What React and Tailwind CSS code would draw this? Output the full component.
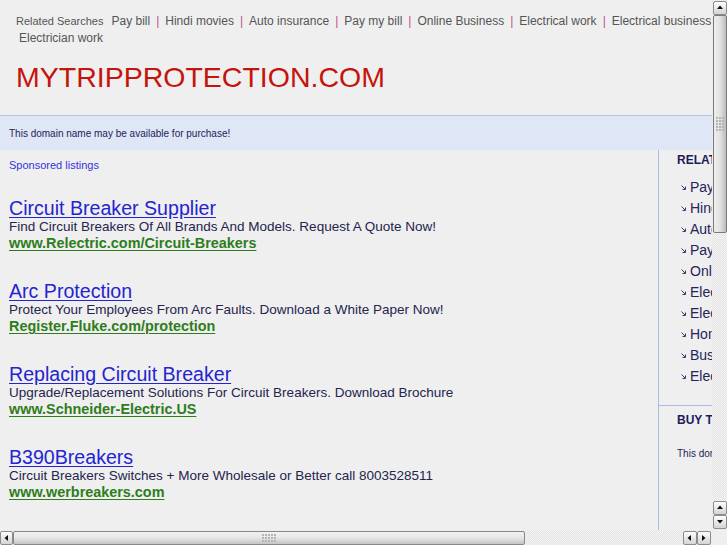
import React from "react";

const topLinks = [
  "Pay bill",
  "Hindi movies",
  "Auto insurance",
  "Pay my bill",
  "Online Business",
  "Electrical work",
  "Electrical business",
  "Electrician work",
];

const ads = [
  {
    title: "Circuit Breaker Supplier",
    desc: "Find Circuit Breakers Of All Brands And Models. Request A Quote Now!",
    url: "www.Relectric.com/Circuit-Breakers",
  },
  {
    title: "Arc Protection",
    desc: "Protect Your Employees From Arc Faults. Download a White Paper Now!",
    url: "Register.Fluke.com/protection",
  },
  {
    title: "Replacing Circuit Breaker",
    desc: "Upgrade/Replacement Solutions For Circuit Breakers. Download Brochure",
    url: "www.Schneider-Electric.US",
  },
  {
    title: "B390Breakers",
    desc: "Circuit Breakers Switches + More Wholesale or Better call 8003528511",
    url: "www.werbreakers.com",
  },
];

const sideLinks = [
  "Pay bill",
  "Hindi movies",
  "Auto insurance",
  "Pay my bill",
  "Online Business",
  "Electrical work",
  "Electrical business",
  "Home insurance",
  "Business loans",
  "Electrician work",
];

function Arrow() {
  return (
    <svg width="5" height="5" viewBox="0 0 5 5" className="shrink-0">
      <path d="M0.5 0.5 L4 4" stroke="#3a3a6a" strokeWidth="1" />
      <path d="M4.5 1.5 V4.5 H1.5" fill="none" stroke="#3a3a6a" strokeWidth="1" />
    </svg>
  );
}

function Tri({ dir }) {
  const d = {
    up: "M1 5 L4 1.5 L7 5 Z",
    down: "M1 2 L4 5.5 L7 2 Z",
    left: "M5 1 L1.5 4 L5 7 Z",
    right: "M2 1 L5.5 4 L2 7 Z",
  }[dir];
  return (
    <svg width="8" height="8" viewBox="0 0 8 8">
      <path d={d} fill="#111" />
    </svg>
  );
}

function SbButton({ dir, className }) {
  return (
    <div
      className={`flex items-center justify-center border border-[#8c8c8c] rounded-[2px] bg-gradient-to-b from-[#fdfdfd] to-[#d4d4d4] ${className}`}
    >
      <Tri dir={dir} />
    </div>
  );
}

function Grip({ cols, rows }) {
  return (
    <div
      className="grid gap-[1px]"
      style={{ gridTemplateColumns: `repeat(${cols}, 2px)`, gridTemplateRows: `repeat(${rows}, 2px)` }}
    >
      {Array.from({ length: cols * rows }).map((_, i) => (
        <div key={i} className="bg-[#b4b4b4]" />
      ))}
    </div>
  );
}

export default function App() {
  return (
    <div className="relative w-[727px] h-[545px] overflow-hidden bg-[#efefef] font-['Liberation_Sans',Arial,sans-serif]">
      <div className="w-[712px] h-[530px] overflow-hidden">
        <div className="w-[900px]">
          {/* Related searches */}
          <div className="w-[740px] pt-[13px] pl-[16px] flex flex-wrap items-baseline leading-[17px] text-[#555]">
            <span className="text-[11px] mr-[5px]">Related Searches</span>
            {topLinks.map((l, i) => (
              <span key={l} className="text-[12px] flex items-baseline">
                <span className="ml-[3px]">{l}</span>
                {i < topLinks.length - 1 && (
                  <span className="ml-[6px] mr-[3px] text-[#c0508a]">|</span>
                )}
              </span>
            ))}
          </div>

          {/* Title */}
          <div className="mt-[14px] pl-[16px] text-[28.5px] leading-[32px] text-[#c4140c]">
            MYTRIPPROTECTION.COM
          </div>

          {/* Banner */}
          <div className="mt-[22px] h-[35px] border-t border-[#b5c5e6] bg-[#dfe6f5] flex items-center pl-[9px] text-[10px] text-[#23235a]">
            This domain name may be available for purchase!
          </div>

          <div className="flex">
            {/* Left column */}
            <div className="w-[658px] shrink-0 pl-[9px] pt-[8px]">
              <div className="text-[11px] leading-[14px] text-[#3434dc]">Sponsored listings</div>
              <div className="mt-[26px] flex flex-col gap-[29px]">
                {ads.map((a) => (
                  <div key={a.title}>
                    <div className="text-[19.6px] leading-[20px] text-[#2424d0] underline underline-offset-[2px]">
                      {a.title}
                    </div>
                    <div className="text-[13.5px] leading-[17px] text-[#24244e]">{a.desc}</div>
                    <div className="text-[14.4px] leading-[17px] font-bold text-[#2e7d1c] underline underline-offset-[2px]">
                      {a.url}
                    </div>
                  </div>
                ))}
              </div>
            </div>

            {/* Right column */}
            <div className="w-[220px] shrink-0 border-l border-[#a9bbe6] h-[380px]">
              <div className="pl-[18px] pt-[3px] text-[12px] leading-[14px] font-bold text-[#1c1c5c]">
                RELATED SEARCHES
              </div>
              <div className="mt-[10px] pl-[22px] pb-[18px]">
                {sideLinks.map((l) => (
                  <div key={l} className="flex items-center gap-[4px] h-[21px] text-[14px] text-[#24245a]">
                    <Arrow />
                    <span>{l}</span>
                  </div>
                ))}
              </div>
              <div className="border-t border-[#a9bbe6] pt-[7px] pl-[18px]">
                <div className="text-[12px] leading-[14px] font-bold text-[#1c1c5c]">BUY THIS DOMAIN</div>
                <div className="mt-[20px] text-[10px] leading-[13px] text-[#24245a]">
                  This domain may be for sale. Buy it now.
                </div>
              </div>
            </div>
          </div>
        </div>
      </div>

      {/* Vertical scrollbar */}
      <div className="absolute right-0 top-0 w-[15px] h-[530px] flex flex-col bg-[repeating-conic-gradient(#e4e4e4_0_25%,#f4f4f4_0_50%)] [background-size:2px_2px]">
        <SbButton dir="up" className="mt-[1px] ml-[1px] w-[14px] h-[14px]" />
        <div className="shrink-0 ml-[1px] w-[14px] h-[218px] border border-[#7a7a7a] rounded-[2px] bg-gradient-to-r from-[#eeeeee] via-[#e2e2e2] to-[#bcbcbc] flex items-center justify-center">
          <Grip cols={3} rows={5} />
        </div>
        <div className="flex-1" />
        <SbButton dir="up" className="ml-[1px] w-[14px] h-[14px]" />
        <SbButton dir="down" className="ml-[1px] mb-[1px] w-[14px] h-[14px]" />
      </div>

      {/* Horizontal scrollbar */}
      <div className="absolute left-0 bottom-0 w-[712px] h-[15px] flex bg-[repeating-conic-gradient(#e4e4e4_0_25%,#f4f4f4_0_50%)] [background-size:2px_2px]">
        <SbButton dir="left" className="mt-[1px] w-[13px] h-[14px]" />
        <div className="shrink-0 mt-[1px] w-[512px] h-[14px] border border-[#888] rounded-[2px] bg-gradient-to-b from-[#f2f2f2] via-[#e6e6e6] to-[#c4c4c4] flex items-center justify-center">
          <Grip cols={5} rows={3} />
        </div>
        <div className="flex-1" />
        <SbButton dir="left" className="mt-[1px] w-[14px] h-[14px]" />
        <SbButton dir="right" className="mt-[1px] mr-[1px] w-[14px] h-[14px]" />
      </div>
    </div>
  );
}
